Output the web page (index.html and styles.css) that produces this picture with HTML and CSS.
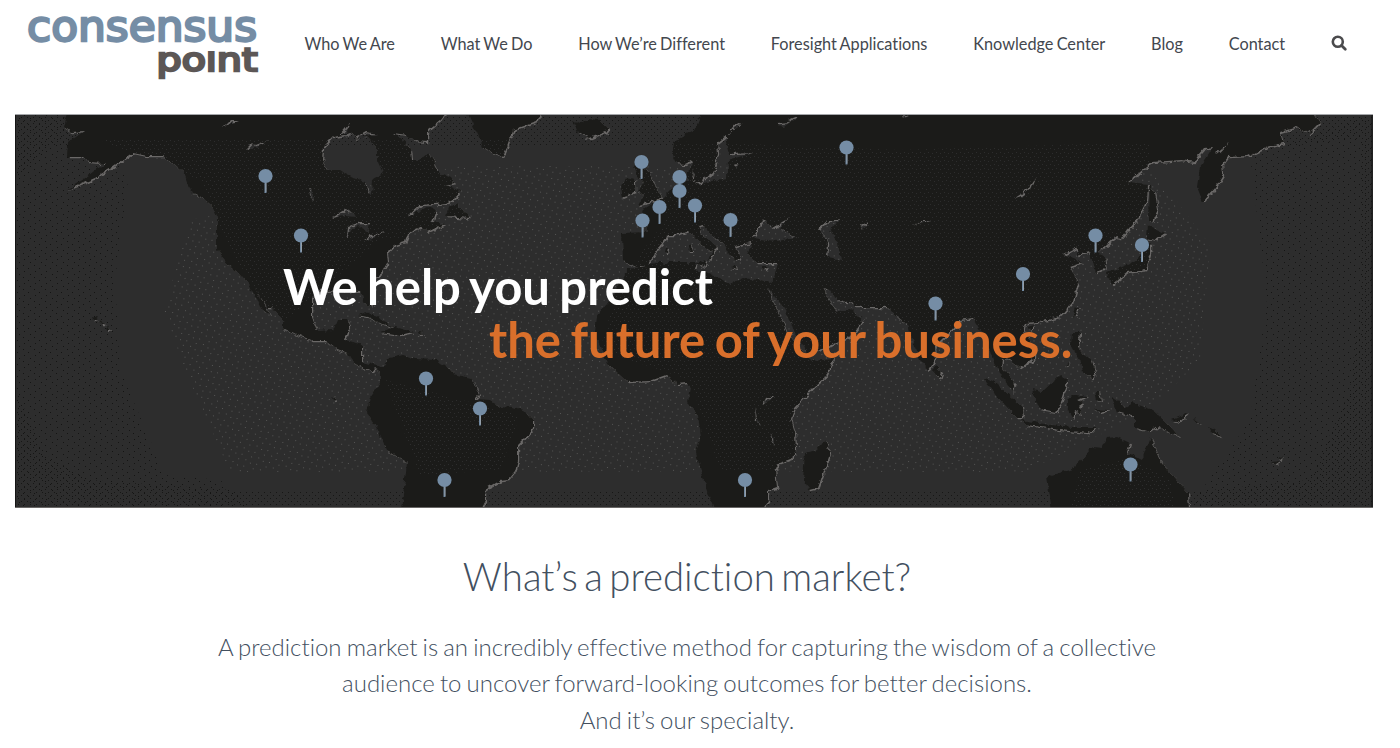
FILE: index.html
```html
<!DOCTYPE html>
<html lang="en">
<head>
<meta charset="utf-8">
<title>Consensus Point</title>
<link rel="stylesheet" href="styles.css">
</head>
<body>
<header class="header">
  <a class="logo" aria-label="Consensus Point">
    <svg width="240" height="86" viewBox="22 0 240 86">
      <text class="logo-bottom" x="156.500" y="70.500" textLength="101" lengthAdjust="spacingAndGlyphs">point</text>
      <rect x="205" y="40" width="13" height="11" fill="#fff"/>
      <text class="logo-top" x="27" y="40.500" textLength="230" lengthAdjust="spacingAndGlyphs">consensus</text>
    </svg>
  </a>
  <nav class="nav">
    <a>Who We Are</a>
    <a>What We Do</a>
    <a>How We’re Different</a>
    <a>Foresight Applications</a>
    <a>Knowledge Center</a>
    <a>Blog</a>
    <a>Contact</a>
    <svg class="search" width="17" height="17" viewBox="0 0 17 17"><circle cx="6.800" cy="6.800" r="5" fill="none" stroke="#4b4b4d" stroke-width="2.600"/><path d="M10.500 10.500L14.300 14.300" stroke="#4b4b4d" stroke-width="2.800" stroke-linecap="round"/></svg>
  </nav>
</header>
<section class="hero">
  <svg class="map" viewBox="15 114 1358 394" preserveAspectRatio="none">
    <defs>
      <filter id="coast" x="0" y="0" width="1" height="1" color-interpolation-filters="sRGB"><feTurbulence type="fractalNoise" baseFrequency=".16" numOctaves="2" seed="4" result="n"/><feDisplacementMap in="SourceGraphic" in2="n" scale="6" xChannelSelector="R" yChannelSelector="G"/></filter>
      <pattern id="glow" width="13" height="12" patternUnits="userSpaceOnUse" patternTransform="rotate(-8)"><path d="M1 1h1v1h-1zM7 3h1v1h-1zM3 7h1v1h-1zM10 9h1v1h-1z" fill="#555554"/></pattern>
      <pattern id="grain" width="8" height="8" patternUnits="userSpaceOnUse"><path d="M0 0h1v1h-1zM4 1h1v1h-1zM2 4h1v1h-1zM6 5h1v1h-1z" fill="#2d2d2d"/></pattern>
      <pattern id="shade" width="11" height="12" patternUnits="userSpaceOnUse"><path d="M1 1h1v1h-1zM6 4h1v1h-1zM2 7h1v1h-1zM8 10h1v1h-1z" fill="#151514"/></pattern>
      <pattern id="dense" width="6" height="6" patternUnits="userSpaceOnUse"><path d="M0 0h1v1h-1zM3 3h1v1h-1z" fill="#171716"/></pattern>
      <path id="land" fill-rule="evenodd" d="M67 112L63 127 72 132 84 131 68 143 67 157 82 157 88 162 105 163 90 175 67 190 95 178 113 167 123 160 133 153 147 156 163 156 173 163 183 172 188 185 193 193 203 198 213 207 217 217 217 250 227 263 238 273 247 283 255 297 263 310 271 316 263 302 252 283 258 293 267 307 272 307 283 320 283 328 297 335 313 341 325 341 335 348 347 353 353 362 362 368 372 372 375 368 380 372 380 383 370 397 367 413 375 425 387 450 407 463 405 480 401 510 480 510 485 500 485 490 500 481 508 480 515 472 518 460 518 445 525 438 533 428 533 420 527 413 513 408 498 407 490 400 475 399 479 395 475 385 470 378 453 374 447 367 437 360 415 359 403 355 390 358 382 367 373 365 362 362 362 345 353 342 345 340 350 325 347 320 337 320 333 330 317 331 312 317 312 298 320 291 345 290 360 291 365 303 370 308 372 297 373 280 383 272 388 263 387 253 395 245 405 242 408 233 422 227 427 232 445 224 432 222 436 211 428 207 407 217 420 205 447 203 457 197 460 190 445 185 455 183 450 178 437 172 433 160 428 153 420 160 412 160 411 150 405 142 393 133 407 135 414 141 428 142 428 130 440 120 446 112Z
M322 160L323 147 333 137 350 134 357 138 366 135 377 147 377 160 383 173 373 179 372 195 368 193 365 182 353 178 340 170 328 170Z
M332 218L345 210 352 212 355 217 345 216ZM347 238L348 226 357 223 370 223 368 233 359 226 352 229ZM362 240L370 236 385 232 374 238ZM307 187L311 188 314 202 309 194ZM245 150L252 143 255 146 267 141 256 149ZM223 127L230 120 239 120 231 123ZM340 134L350 122 346 134ZM354 138L365 132 379 134 364 136Z
M467 112L483 147 493 153 503 157 507 147 513 130 537 122 542 112ZM573 120L580 124 587 119 600 120 608 128 605 132 590 138 578 133ZM450 205L457 204 470 218 447 216ZM358 315L367 312 387 323 394 327 382 324 368 317ZM380 332L395 327 413 332 400 335ZM418 332L425 333 419 334ZM92 317L98 319 93 319ZM99 320L105 323 101 323ZM106 325L111 329 107 331ZM332 396L336 401 333 402ZM1272 462L1278 461 1277 465ZM1279 459L1283 457 1281 460Z
M702 112L695 130 673 142 672 153 677 163 685 164 693 160 690 169 687 171 687 182 677 185 670 190 662 198 655 202 641 211 648 220 648 232 622 233 623 260 635 266 646 266 628 269 612 297 597 317 595 333 607 363 627 382 650 381 667 375 677 383 687 382 690 388 687 402 698 415 701 437 696 452 703 477 714 510 762 510 768 500 768 490 777 487 775 470 780 463 793 458 796 450 795 433 791 418 795 407 813 388 827 375 834 358 812 360 803 354 787 333 780 315 767 288 783 307 798 337 807 353 820 350 853 335 863 320 850 309 836 312 823 288 828 289 837 300 853 303 853 307 888 307 897 317 908 323 910 333 920 360 928 370 936 357 935 347 950 332 960 320 973 318 980 330 987 340 993 360 1003 377 1013 392 1015 383 1002 367 1003 358 1011 361 1020 368 1035 358 1035 347 1023 333 1025 323 1037 322 1060 317 1073 302 1078 283 1073 273 1070 267 1082 263 1063 255 1078 247 1077 255 1090 252 1092 260 1095 273 1107 268 1105 258 1098 252 1108 243 1115 237 1122 238 1138 218 1147 200 1148 185 1127 183 1152 162 1182 160 1195 162 1197 157 1205 148 1213 147 1200 167 1197 187 1203 202 1215 188 1223 175 1222 165 1228 157 1248 156 1267 147 1283 143 1280 132 1297 127 1310 133 1320 123 1313 112Z
M737 123L727 135 717 143 718 153 713 173 700 182 693 182 694 168 692 180 700 184 712 181 727 178 728 160 753 153 730 154 727 143 727 135 742 124Z
M648 264L657 250 668 235 678 235 688 231 692 235 698 242 712 252 708 262 717 248 714 244 705 238 698 226 703 225 712 235 723 243 730 255 737 260 742 259 735 247 745 244 753 243 747 253 757 263 778 263 773 282 743 278 730 284 713 275 695 270 697 262 671 262Z
M752 238L763 220 773 228 790 218 780 228 797 238 777 241 760 239ZM819 228L828 220 839 220 830 232 838 243 841 260 827 257 828 243ZM860 225L868 222 863 230ZM914 225L920 220 932 220 919 222ZM1015 198L1027 190 1035 178 1031 189 1022 196ZM777 123L790 122 783 128ZM788 120L798 116 795 121ZM900 114L910 116 902 119ZM763 405L767 397 773 397 767 403ZM755 407L757 418 760 427 756 421ZM772 432L774 440 774 447 771 440ZM734 165L738 164 737 168ZM1215 154L1228 143 1221 152Z
M688 246L691 244 692 252 689 252ZM665 248L668 247 667 253 664 252ZM695 263L706 260 705 267ZM731 267L735 264 737 269ZM762 267L768 267 764 270Z
M633 165L641 160 650 173 657 190 661 196 655 201 638 205 643 195 637 190 645 183 637 177ZM620 188L627 178 635 180 635 193 622 198ZM1150 185L1155 192 1158 210 1153 222 1149 220ZM1148 225L1165 233 1155 240 1147 238ZM1150 243L1150 253 1145 270 1127 273 1112 285 1107 273 1127 265 1138 260 1142 250ZM825 440L830 453 818 488 810 490 803 480 805 453 817 450ZM935 365L942 372 940 378 934 375ZM983 378L993 380 1022 407 1023 418 1017 418 997 397ZM1022 420L1050 425 1073 427 1097 427 1088 433 1060 430 1027 425ZM1032 390L1042 392 1060 375 1068 380 1063 397 1057 412 1040 409ZM1067 400L1073 395 1089 396 1077 400 1083 403 1078 407 1082 415 1075 411 1073 419 1067 408ZM1072 333L1080 333 1078 347 1083 353 1092 360 1095 372 1092 379 1083 372 1081 362 1077 355 1071 345ZM1073 309L1079 308 1075 318ZM1026 327L1034 325 1031 331ZM1063 367L1070 361 1066 366ZM1095 391L1099 391 1101 402 1097 400ZM1093 409L1109 410 1100 412ZM1112 397L1120 402 1125 408 1133 403 1153 410 1167 423 1180 437 1170 433 1158 426 1150 432 1135 428 1135 417 1117 412ZM1172 420L1188 413 1180 422ZM1193 417L1202 424 1197 422ZM1207 426L1214 429 1222 437 1212 434ZM1047 477L1073 468 1093 447 1102 448 1107 438 1117 437 1130 443 1127 452 1142 460 1150 437 1155 447 1163 465 1178 482 1188 493 1189 510 1052 510Z"/>
      <clipPath id="landclip"><use href="#land"/></clipPath>
      <g id="pin"><path d="M0 6V17" stroke="#7189a1" stroke-width="2"/><path d="M.5 7V16" stroke="#b9b5b0" stroke-width=".5"/><circle r="7.100" fill="#758da5"/></g>
    </defs>
    <rect x="15" y="114" width="1358" height="394" fill="#2d2d2d"/>
    <path d="M190 220L460 166 1150 166 1210 245 1200 360 1150 410 1025 472H230L185 370 164 310Z" fill="url(#glow)"/>
    <path d="M16 115H85L128 180 115 280 120 370 165 475 220 480 250 507H16ZM1250 155L1310 135 1372 115V507H1190L1250 420 1267 300Z" fill="url(#shade)"/>
    <path d="M16 115H1372V138L1345 140 1300 145H50L25 170 16 180ZM16 390L45 455 90 480 260 492H1190L1310 480 1350 390 1360 300 1360 115H1372V507H16Z" fill="url(#dense)"/>
    <g filter="url(#coast)"><use href="#land" transform="translate(1.200 1.200)" fill="#6a6867"/><use href="#land" fill="#1b1b19"/></g>
    <g clip-path="url(#landclip)"><path d="M100 140H640L900 150 1150 142V320L1040 330H880L800 470H720L690 380 600 350 620 280 670 215 640 205 500 230 380 240 280 325 230 250 200 180ZM385 380L520 415 500 470 420 475ZM1080 470L1130 458 1170 480 1175 507H1070Z" fill="url(#grain)"/></g>
    <use href="#pin" x="265.500" y="176"/><use href="#pin" x="301" y="235.500"/><use href="#pin" x="426" y="378.500"/><use href="#pin" x="480" y="408.500"/><use href="#pin" x="444.500" y="480"/><use href="#pin" x="641.500" y="162"/><use href="#pin" x="679.500" y="177"/><use href="#pin" x="679.500" y="191"/><use href="#pin" x="659.500" y="207"/><use href="#pin" x="695" y="205.500"/><use href="#pin" x="642.500" y="220.500"/><use href="#pin" x="730.500" y="220"/><use href="#pin" x="846.500" y="147.500"/><use href="#pin" x="745" y="480"/><use href="#pin" x="935.500" y="303.500"/><use href="#pin" x="1023" y="274"/><use href="#pin" x="1095.500" y="235.500"/><use href="#pin" x="1142" y="245"/><use href="#pin" x="1130.500" y="464.500"/>
    <path d="M15.500 114V508M1372 114V508" stroke="#151515"/><path d="M15 114.500H1373" stroke="#a5a7aa"/><path d="M15 507.500H1373" stroke="#696766"/>
  </svg>
  <h1 class="slogan"><span class="slogan-white">We help you predict</span><span class="slogan-orange">the future of your business.</span></h1>
</section>
<main class="intro">
  <h2>What’s a prediction market?</h2>
  <p>A prediction market is an incredibly effective method for capturing the wisdom of a collective<br>audience to uncover forward-looking outcomes for better decisions.</p>
  <p class="last">And it’s our specialty.</p>
</main>
</body>
</html>
```
FILE: styles.css
```css
* { box-sizing: border-box; }
body { margin: 0; width: 1400px; height: 748px; overflow: hidden; background: #fff; font-family: Lato, sans-serif; font-variant-ligatures: none; }
.header { display: flex; height: 114px; padding-left: 22px; }
.logo { width: 240px; height: 86px; }
.logo text { font-family: "DejaVu Sans", sans-serif; stroke-width: 2.4px; }
.logo-top { font-size: 42px; fill: #758da5; stroke: #758da5; }
.logo-bottom { font-size: 31.5px; fill: #5c5756; stroke: #5c5756; }
.nav { display: flex; align-items: center; gap: 45.8px; height: 86px; margin-left: 42.5px; font-size: 16.3px; color: #43474e; white-space: nowrap; word-spacing: -1px; }
.nav a { padding-top: 1px; }
.search { display: block; }
.hero { display: grid; width: 1358px; height: 394px; margin-left: 15px; }
.map, .slogan { grid-area: 1 / 1; }
.map { width: 1358px; height: 394px; display: block; }
.slogan { z-index: 1; display: flex; flex-direction: column; margin: 0; padding: 146px 0 0 268px; font-size: 49px; line-height: 53px; font-weight: 700; white-space: nowrap; word-spacing: -2.5px; }
.slogan-white { color: #fff; }
.slogan-orange { color: #d96f2b; padding-left: 206px; }
.intro { width: 1374px; text-align: center; color: #43505f; font-weight: 300; }
.intro h2 { margin: 43px 0 0; font-size: 38.4px; line-height: 50px; font-weight: 300; word-spacing: -4px; }
.intro p { margin: 28px 0 0; font-size: 24px; line-height: 36px; white-space: nowrap; word-spacing: -1.4px; }
.intro .last { margin: 1px 0 0; }
```
